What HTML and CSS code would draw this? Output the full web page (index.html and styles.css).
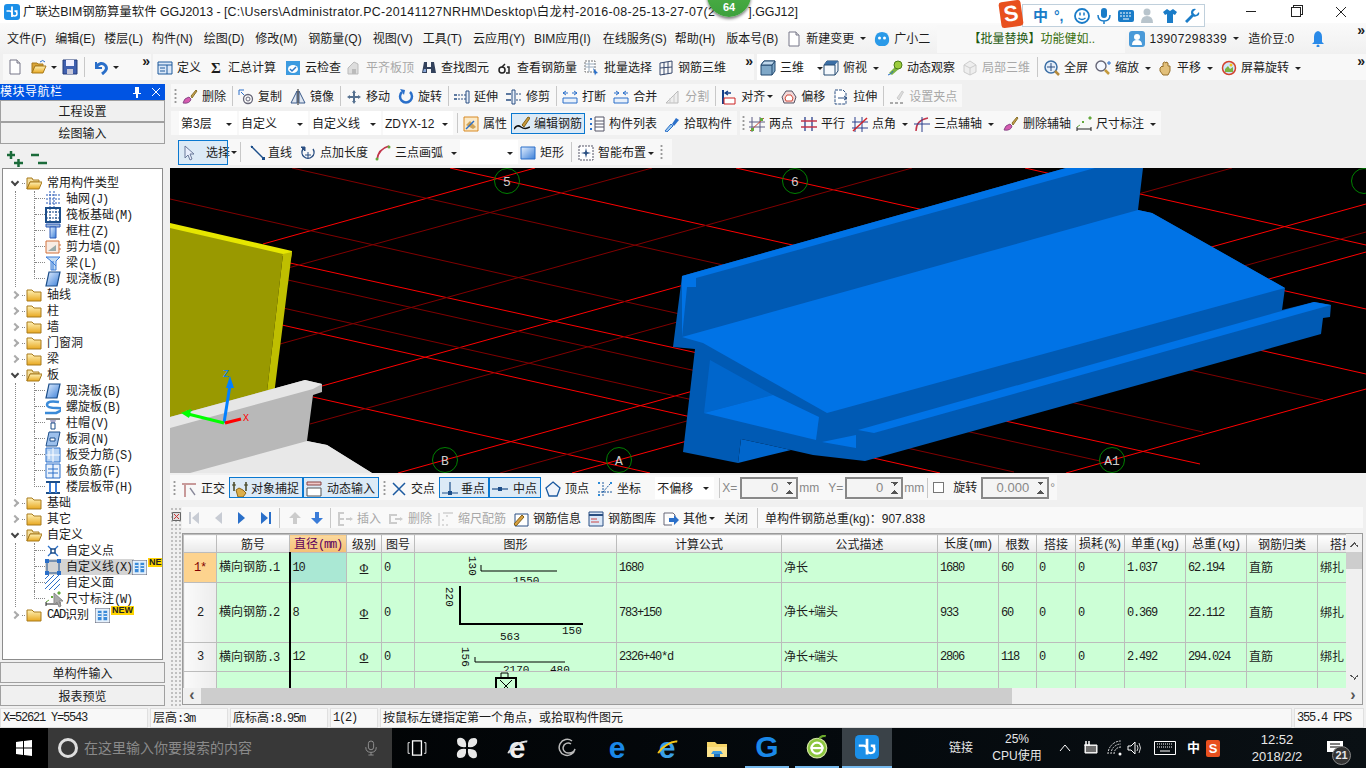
FILE: index.html
```html
<!DOCTYPE html>
<html lang="zh-CN">
<head>
	<meta charset="UTF-8">
	<title>广联达BIM钢筋算量软件 GGJ2013</title>
	<link rel="stylesheet" href="styles.css">
</head>
<body>
<svg class="sprite" xmlns="http://www.w3.org/2000/svg">
	<defs>
		<linearGradient id="gFolder" x1="0" y1="0" x2="0" y2="1"><stop offset="0" stop-color="#fff2b8"/><stop offset="1" stop-color="#e8a820"/></linearGradient>
		<linearGradient id="gBlue" x1="0" y1="0" x2="1" y2="1"><stop offset="0" stop-color="#e4f0ff"/><stop offset="1" stop-color="#3b7fd8"/></linearGradient>
	</defs>
	<!-- 文件 -->
	<symbol id="new" viewBox="0 0 16 16"><path d="M3 1h7l3 3v11H3z" fill="#fff" stroke="#778"/><path d="M10 1v3h3" fill="#ddd" stroke="#778"/></symbol>
	<symbol id="open" viewBox="0 0 16 16"><path d="M1 4h5l1 1h5v2H4L1 14z" fill="#d9a437" stroke="#a87a1c"/><path d="M4 7h11l-3 7H1z" fill="url(#gFolder)" stroke="#a87a1c"/><path d="M9 3q3-3 5 0" fill="none" stroke="#2a6fc9"/></symbol>
	<symbol id="save" viewBox="0 0 16 16"><path d="M1 1h14v14H1z" fill="#3f5fae" stroke="#223a78"/><path d="M4 1h8v6H4z" fill="#eef"/><path d="M5 10h6v5H5z" fill="#c8c8d8"/></symbol>
	<symbol id="undo" viewBox="0 0 16 16"><path d="M3 3v6h6" fill="none" stroke="#2a6fc9" stroke-width="2"/><path d="M3 8q5-6 9-2t-3 9" fill="none" stroke="#2a6fc9" stroke-width="3"/></symbol>
	<!-- 主工具栏 -->
	<symbol id="def" viewBox="0 0 16 16"><path d="M1 2h14v12H1z" fill="#dbe8f8" stroke="#1e5a9c"/><path d="M1 5h14M3 8h5M3 11h5M10 5v9" stroke="#1e5a9c"/></symbol>
	<symbol id="cloud" viewBox="0 0 16 16"><path d="M1 1h14v14H1z" fill="#3d9be0" rx="2"/><ellipse cx="8" cy="9" rx="5" ry="4" fill="#fff"/><path d="M5 9l2 2 4-4" fill="none" stroke="#2a78c9" stroke-width="1.5"/></symbol>
	<symbol id="flat" viewBox="0 0 16 16"><path d="M2 8l6-6 4 2v10H2z" fill="#ddd" stroke="#bbb"/><path d="M6 9h4v5H6z" fill="#bbb"/></symbol>
	<symbol id="find" viewBox="0 0 16 16"><path d="M3 2h3v5h4V2h3l2 11h-5V9H6v4H1z" fill="#33425c"/><path d="M3 9h2v3H2z" fill="#8aa8d8"/></symbol>
	<symbol id="look" viewBox="0 0 16 16"><circle cx="5" cy="10" r="3" fill="none" stroke="#222" stroke-width="1.5"/><path d="M10 7h2v6h-3M5 7l3-3" fill="none" stroke="#222" stroke-width="1.5"/></symbol>
	<symbol id="batch" viewBox="0 0 16 16"><path d="M1 1h10v11H1z" fill="#fff" stroke="#777" stroke-dasharray="2 1"/><path d="M1 4h10M1 7h10M5 1v11" stroke="#9ab"/><path d="M9 8l5 5-2 .5-1 2z" fill="#2a6fc9"/></symbol>
	<symbol id="bars" viewBox="0 0 16 16"><path d="M2 3l12-2v12L2 15z" fill="none" stroke="#36486c"/><path d="M6 2v13M10 2v12M2 8l12-1" stroke="#36486c"/></symbol>
	<symbol id="cube" viewBox="0 0 16 16"><path d="M1 5l3-4h11v10l-3 4H1z" fill="#7fa8c8" stroke="#244a70"/><path d="M1 5h11v10M12 5l3-4" fill="none" stroke="#244a70"/><path d="M1 5h11l3-4H4z" fill="#c0d8ec" stroke="#244a70"/></symbol>
	<symbol id="top" viewBox="0 0 16 16"><path d="M1 5l3-4h11v10l-3 4H1z" fill="#f4f8fc" stroke="#244a70"/><path d="M1 5l3-4h11l-3 4z" fill="#3a6ea5"/><path d="M12 5v10M1 5h11" stroke="#244a70"/></symbol>
	<symbol id="orbit" viewBox="0 0 16 16"><path d="M2 13l8-8 3 3-8 7z" fill="#7cb342"/><circle cx="11" cy="5" r="4" fill="#9ccc3c" stroke="#4a7a18"/><path d="M1 15q4-1 5-4" stroke="#2a6fc9" fill="none"/></symbol>
	<symbol id="local" viewBox="0 0 16 16"><path d="M2 5l6-4 6 4v7l-6 3-6-3z" fill="#eee" stroke="#ccc"/><path d="M2 5l6 3 6-3M8 8v7" stroke="#ccc" fill="none"/></symbol>
	<symbol id="full" viewBox="0 0 16 16"><circle cx="7" cy="7" r="6" fill="#e4eefa" stroke="#3a6ea5" stroke-width="1.5"/><path d="M7 3v8M3 7h8" stroke="#2a4f82"/><path d="M11 11l4 4" stroke="#b58a3c" stroke-width="2.5"/></symbol>
	<symbol id="zoom" viewBox="0 0 16 16"><circle cx="6" cy="6" r="5" fill="#f4f8ff" stroke="#667" stroke-width="1.4"/><path d="M10 10l4 4" stroke="#c49a3c" stroke-width="2.5"/><path d="M14 1v4M12 3h4" stroke="#2a6fc9"/></symbol>
	<symbol id="hand" viewBox="0 0 16 16"><path d="M3 8l2-2 1 1V3l1.500-1L9 3v-1l2 1v3l2 0v5l-2 4H6L3 11z" fill="#e2c07a" stroke="#96702c"/></symbol>
	<symbol id="screen" viewBox="0 0 16 16"><circle cx="8" cy="8" r="6.500" fill="#cfe6fa" stroke="#d2432e" stroke-width="1.500"/><path d="M4 9l3-3 2 3 3-2v5H4z" fill="#7cb342"/><circle cx="10" cy="5" r="1.500" fill="#f5c518"/></symbol>
	<!-- 修改 -->
	<symbol id="brush" viewBox="0 0 16 16"><path d="M9 7l5-6 1 1-5 7z" fill="#c8a04a" stroke="#88702c"/><path d="M1 14q1-5 6-6l2 2q-1 5-8 4z" fill="#d75ab0" stroke="#884a88"/></symbol>
	<symbol id="copy" viewBox="0 0 16 16"><circle cx="10" cy="10" r="4.500" fill="none" stroke="#667" stroke-width="1.300"/><circle cx="10" cy="10" r="2" fill="none" stroke="#667"/><path d="M1 1h5M1 1v5M3 3l3 3" fill="none" stroke="#2a6fc9"/></symbol>
	<symbol id="mirror" viewBox="0 0 16 16"><path d="M7 2v12H1zM9 2v12h6z" fill="#dfe6f0" stroke="#3a5a8a"/><path d="M8 0v16" stroke="#222"/></symbol>
	<symbol id="move" viewBox="0 0 16 16"><path d="M8 1l2 3H9v3h3V6l3 2-3 2V9H9v3h1l-2 3-2-3h1V9H4v1L1 8l3-2v1h3V4H6z" fill="#55708f"/></symbol>
	<symbol id="rotate" viewBox="0 0 16 16"><path d="M4 3a6 6 0 1 0 8 0" fill="none" stroke="#2a6fc9" stroke-width="2.500"/><path d="M2 0l5 1-1 5z" fill="#2a6fc9"/></symbol>
	<symbol id="extend" viewBox="0 0 16 16"><path d="M12 2h3v12h-3z" fill="#e8f0fa" stroke="#2a4f82"/><path d="M0 6h3M0 10h3" stroke="#2a4f82" stroke-width="1.500"/><path d="M4 6h8M4 10h8" stroke="#2a4f82" stroke-dasharray="2 1"/></symbol>
	<symbol id="trim" viewBox="0 0 16 16"><path d="M6 1h3v14H6z" fill="#e8f0fa" stroke="#2a4f82"/><path d="M0 5h5M0 11h5" stroke="#2a4f82" stroke-width="1.500"/><path d="M10 5h5M10 11h5" stroke="#2a4f82" stroke-dasharray="2 1"/></symbol>
	<symbol id="breakl" viewBox="0 0 16 16"><path d="M1 9h14v5H1z" fill="#e8f0fa" stroke="#2a6fc9"/><path d="M4 2l-3 2 3 2M1 4h5M12 2l3 2-3 2M10 4h5" fill="none" stroke="#2a6fc9"/></symbol>
	<symbol id="merge" viewBox="0 0 16 16"><path d="M1 9h14v5H1z" fill="#e8f0fa" stroke="#2a6fc9"/><path d="M3 2l3 2-3 2M1 4h5M13 2l-3 2 3 2M10 4h5" fill="none" stroke="#2a6fc9"/></symbol>
	<symbol id="split" viewBox="0 0 16 16"><path d="M1 14L13 2v12z" fill="#eee" stroke="#bbb"/><path d="M5 14V9M9 14V6" stroke="#ccc"/></symbol>
	<symbol id="align" viewBox="0 0 16 16"><path d="M2 1v14" stroke="#14408a" stroke-width="2"/><path d="M3 9h11v6H3z" fill="#fff" stroke="#c22"/><path d="M4 4h6M7 2L4 4l3 2" fill="none" stroke="#14408a" stroke-width="1.300"/></symbol>
	<symbol id="offset" viewBox="0 0 16 16"><path d="M5 2h6l4 6-2 6H3L1 8z" fill="#f4d8d8" stroke="#556"/><path d="M6 6h4l2 3-1 3H5L4 9z" fill="#fff" stroke="#d24a3a"/></symbol>
	<symbol id="stretch" viewBox="0 0 16 16"><path d="M2 1h8l3 3v11H2z" fill="#fff" stroke="#2a4f82" stroke-dasharray="3 1"/><path d="M5 9h8M11 7l3 2-3 2" stroke="#2a4f82" fill="none"/></symbol>
	<symbol id="grip" viewBox="0 0 16 16"><path d="M8 9l5-7 1.500 1L10 11z" fill="#ddd" stroke="#ccc"/><path d="M1 14h3M6 14h3M11 14h3" stroke="#aaa" stroke-width="2"/></symbol>
	<!-- 属性 -->
	<symbol id="attr" viewBox="0 0 16 16"><path d="M1 1h14v14H1z" fill="#fbe9c6" stroke="#d88a24"/><path d="M3 9l4-4 6 6-3 2z" fill="#d0a458"/><path d="M3 13l8-8" stroke="#2a6fc9" stroke-width="1.500"/></symbol>
	<symbol id="edit" viewBox="0 0 16 16"><path d="M8 9l6-8 2 1-6 9z" fill="#c99a3c" stroke="#806018"/><path d="M0 13q3-5 7-2t9 0" stroke="#111" fill="none" stroke-width="1.500"/></symbol>
	<symbol id="list" viewBox="0 0 16 16"><path d="M1 2h2v2H1zM1 7h2v2H1zM1 12h2v2H1z" fill="#2a6fc9"/><path d="M6 1h9v14H6z" fill="#fff" stroke="#556"/><path d="M6 5h9M6 8h9M6 11h9" stroke="#556"/></symbol>
	<symbol id="pick" viewBox="0 0 16 16"><path d="M1 15l6-7 2 2-6 6z" fill="#9cc8ee" stroke="#2a6fc9"/><path d="M8 8l4-6 3 2-5 6z" fill="#2a6fc9"/></symbol>
	<symbol id="twop" viewBox="0 0 16 16"><path d="M3 1v15M11 1v15M0 6h16M0 11h16" stroke="#5c5c84"/><path d="M1 15L15 2" stroke="#c24a3a"/><path d="M2 12h3v3H2zM11 2h3v3h-3z" fill="#64a83c"/></symbol>
	<symbol id="para" viewBox="0 0 16 16"><path d="M4 1v14M11 1v14" stroke="#2a3f8c" stroke-width="1.300"/><path d="M0 5h16M0 11h16" stroke="#c2344a" stroke-width="1.300"/></symbol>
	<symbol id="angle" viewBox="0 0 16 16"><path d="M3 1v15M10 1v15M0 6h16M0 12h16" stroke="#2a3f8c"/><path d="M1 15L15 2" stroke="#d2242a" stroke-width="1.500"/></symbol>
	<symbol id="arc3" viewBox="0 0 16 16"><path d="M2 15Q2 4 14 2" fill="none" stroke="#c2344a" stroke-width="1.500"/><path d="M8 1v15M0 8h16" stroke="#2a3f8c"/></symbol>
	<symbol id="dim" viewBox="0 0 16 16"><path d="M1 11v4M15 11v4M1 13h14" stroke="#222"/><path d="M1 11l3-2M13 1h2v2h-2z" fill="#64a83c" stroke="#64a83c"/><path d="M6 5h2v2H6z" fill="#64a83c"/></symbol>
	<!-- 绘图 -->
	<symbol id="arrow" viewBox="0 0 16 16"><path d="M4 1v12l3-3 2 5 2-1-2-5h4z" fill="#e8eefc" stroke="#6a7a9a"/></symbol>
	<symbol id="line" viewBox="0 0 16 16"><path d="M1 1l13 13" stroke="#1c4e8a" stroke-width="1.500"/><path d="M1 1h2v2H1zM12 12h3v3h-3z" fill="#1c4e8a"/></symbol>
	<symbol id="plus" viewBox="0 0 16 16"><path d="M3 4a6 6 0 1 0 10 0" fill="none" stroke="#2a4f82" stroke-width="1.400"/><path d="M1 2l4 0v4zM8 7v6M5 10h6" fill="#2a4f82" stroke="#2a4f82"/></symbol>
	<symbol id="arc" viewBox="0 0 16 16"><path d="M2 15Q3 4 14 1" fill="none" stroke="#c2344a" stroke-width="1.700"/><circle cx="2" cy="14" r="1.500" fill="#64a83c"/><circle cx="14" cy="2" r="1.500" fill="#64a83c"/></symbol>
	<symbol id="rect" viewBox="0 0 16 16"><path d="M1 2h14v12H1z" fill="url(#gBlue)" stroke="#2a6fc9"/></symbol>
	<symbol id="smart" viewBox="0 0 16 16"><path d="M1 1h14v14H1z" fill="#fff" stroke="#556" stroke-dasharray="2 1"/><path d="M8 3l1 4 4 1-4 1-1 4-1-4-4-1 4-1z" fill="#2a4f82"/></symbol>
	<!-- 捕捉 -->
	<symbol id="ortho" viewBox="0 0 16 16"><path d="M1 2h14v2H5v12H3V4H1z" fill="#c89a9a"/><path d="M9 7l5 7" stroke="#889" stroke-width="1.300"/></symbol>
	<symbol id="snap" viewBox="0 0 16 16"><path d="M2 1v9M14 1v9" stroke="#442" stroke-width="1.500"/><path d="M0 4h4M12 4h4" stroke="#442"/><path d="M4 9l3-2 4 2 3 3-3 4H6z" fill="#dcae4a" stroke="#906818"/></symbol>
	<symbol id="dyn" viewBox="0 0 16 16"><path d="M1 1h14v3H1z" fill="#f0c8c8" stroke="#844"/><path d="M1 7h14v8H1z" fill="#fff" stroke="#555"/></symbol>
	<symbol id="cross" viewBox="0 0 16 16"><path d="M2 2l12 12M14 2L2 14" stroke="#1c5aa0" stroke-width="1.500"/></symbol>
	<symbol id="perp" viewBox="0 0 16 16"><path d="M8 1v11M0 12h16" stroke="#1c4e8a" stroke-width="1.200"/><path d="M6 10h4v4H6z" fill="#1c4e8a"/></symbol>
	<symbol id="mid" viewBox="0 0 16 16"><path d="M0 8h16" stroke="#1c4e8a" stroke-width="1.200"/><path d="M6 6h4v4H6z" fill="#1c4e8a"/></symbol>
	<symbol id="vertex" viewBox="0 0 16 16"><path d="M8 1l7 6-3 8H4L1 7z" fill="#f0f4fa" stroke="#1c5aa0" stroke-width="1.300"/></symbol>
	<symbol id="coord" viewBox="0 0 16 16"><path d="M6 1v14M1 11h14M6 11l7-8" stroke="#1c5aa0" stroke-dasharray="2 1" fill="none"/><path d="M1 1h2v2H1zM13 1h2v2h-2zM1 13h2v2H1z" fill="#2a8ad8"/></symbol>
	<!-- 明细 -->
	<symbol id="first" viewBox="0 0 16 16"><path d="M3 2h2v12H3zM13 2v12L6 8z" fill="#c8ccd4"/></symbol>
	<symbol id="prev" viewBox="0 0 16 16"><path d="M11 2v12L4 8z" fill="#c8ccd4"/></symbol>
	<symbol id="next" viewBox="0 0 16 16"><path d="M5 2v12l7-6z" fill="#2a6fc9"/></symbol>
	<symbol id="last" viewBox="0 0 16 16"><path d="M3 2v12l7-6zM11 2h2v12h-2z" fill="#2a6fc9"/></symbol>
	<symbol id="up" viewBox="0 0 16 16"><path d="M8 2l6 6h-4v6H6V8H2z" fill="#ccc"/></symbol>
	<symbol id="down" viewBox="0 0 16 16"><path d="M8 14l6-6h-4V2H6v6H2z" fill="#3a7cd8"/></symbol>
	<symbol id="ins" viewBox="0 0 16 16"><path d="M1 1h6v2H3v4h4v2H3v4h4v2H1zM9 7h4v2H9z" fill="#ccc"/><path d="M13 6l3 2-3 2z" fill="#ccc"/></symbol>
	<symbol id="del" viewBox="0 0 16 16"><path d="M1 3h8v2H3v6h6v2H1zM7 7h5v2H7z" fill="#ccc"/><path d="M12 6l3 2-3 2z" fill="#ccc"/></symbol>
	<symbol id="scale" viewBox="0 0 16 16"><path d="M1 2v13M15 2H5M4 14h2M8 14h2M4 9h2M8 5h2" stroke="#bbb"/></symbol>
	<symbol id="info" viewBox="0 0 16 16"><path d="M2 3h13v12H2z" fill="#fff" stroke="#2a4f82"/><path d="M1 13l8-9 2 2-8 9z" fill="#d8a040" stroke="#806018"/></symbol>
	<symbol id="lib" viewBox="0 0 16 16"><path d="M1 1h14v14H1z" fill="#dbe8f8" stroke="#2a4f82"/><path d="M1 4h14" stroke="#2a4f82" stroke-width="2"/><path d="M3 8h6M3 11h8" stroke="#c44"/></symbol>
	<symbol id="other" viewBox="0 0 16 16"><path d="M1 2h9l2 2v3M1 2v12h8" fill="#fff" stroke="#667"/><path d="M6 7h5V4l5 5-5 5v-3H6z" fill="#2a6fc9"/></symbol>
	<!-- 导航树 -->
	<symbol id="folder" viewBox="0 0 16 14"><path d="M1 2h5l2 2h7v9H1z" fill="url(#gFolder)" stroke="#a87a1c"/></symbol>
	<symbol id="folderopen" viewBox="0 0 16 14"><path d="M1 2h5l1 2h6v2H4l-3 7z" fill="#f5e0a0" stroke="#a87a1c"/><path d="M4 6h12l-3 7H1z" fill="url(#gFolder)" stroke="#a87a1c"/></symbol>
	<symbol id="axis" viewBox="0 0 16 16"><path d="M1 4h14M1 8h14M1 12h14M5 0v16M9 0v16" stroke="#2a5ab8" stroke-dasharray="2 1"/></symbol>
	<symbol id="raft" viewBox="0 0 16 16"><path d="M1 1h14v14H1z" fill="#fff" stroke="#1c4e8a" stroke-width="2"/><path d="M1 5h14M1 11h14M5 1v14M11 1v14" stroke="#1c4e8a" stroke-dasharray="2 1"/></symbol>
	<symbol id="col" viewBox="0 0 16 16"><path d="M1 1h14v3H1z" fill="#9ab4d8" stroke="#2a5ab8"/><path d="M5 4h6v11H5z" fill="url(#gBlue)" stroke="#2a5ab8"/></symbol>
	<symbol id="wall" viewBox="0 0 16 16"><path d="M1 2h13v12H1z" fill="#f8ece4" stroke="#d2703a"/><path d="M3 12l8-6v6z" fill="#9aa"/><path d="M15 5v2M15 9v2" stroke="#d2703a"/></symbol>
	<symbol id="beam" viewBox="0 0 16 16"><path d="M1 2h14l-4 4v9H6V6z" fill="#c4dcf4" stroke="#3a7cd8"/><path d="M6 6l5 5M8 6v9" stroke="#3a7cd8"/></symbol>
	<symbol id="slab" viewBox="0 0 16 16"><path d="M4 1h11l-3 14H1z" fill="url(#gBlue)" stroke="#1c4e8a" stroke-width="1.200"/></symbol>
	<symbol id="spiral" viewBox="0 0 16 16"><path d="M14 3Q2 1 2 6q0 3 10 3t-1 5H0" fill="none" stroke="#3a8ad8" stroke-width="2.500"/></symbol>
	<symbol id="cap" viewBox="0 0 16 16"><path d="M1 3h14v2H1z" fill="#888"/><path d="M5 5h6l-1 3H6z" fill="#aac"/><path d="M6 8h4v6H6z" fill="#fff" stroke="#1c4e8a"/></symbol>
	<symbol id="hole" viewBox="0 0 16 16"><path d="M4 1h11l-3 14H1z" fill="#9cc0ec" stroke="#1c4e8a"/><path d="M5 7h5v3H5z" fill="#fff" stroke="#1c4e8a"/></symbol>
	<symbol id="rebar" viewBox="0 0 16 16"><path d="M1 1h14v14H1z" fill="#b8d4f4" stroke="#2a6fc9"/><path d="M1 8h14M8 1v14M4 4v8" stroke="#fff"/></symbol>
	<symbol id="neg" viewBox="0 0 16 16"><path d="M1 1h14v14H1z" fill="#eaf2fc" stroke="#2a6fc9"/><path d="M3 6h10M3 10h10M8 1v14" stroke="#2a6fc9"/></symbol>
	<symbol id="band" viewBox="0 0 16 16"><path d="M1 3h14M1 14h14" stroke="#1c4e8a" stroke-width="2"/><path d="M5 4v10M11 4v10" stroke="#3a7cd8" stroke-width="2"/></symbol>
	<symbol id="pt" viewBox="0 0 16 16"><path d="M3 3l10 10M13 3L3 13" stroke="#2a6fc9" stroke-width="1.300"/><path d="M6 6h4v4H6z" fill="#fff" stroke="#1c4e8a" stroke-width="1.500"/></symbol>
	<symbol id="lineb" viewBox="0 0 16 16"><path d="M2 2h12v12H2z" fill="none" stroke="#1c4e8a"/><path d="M0 0h4v4H0zM12 0h4v4h-4zM0 12h4v4H0zM12 12h4v4h-4z" fill="#2a6fc9"/></symbol>
	<symbol id="hatch" viewBox="0 0 16 16"><path d="M0 4l4-4M0 9l9-9M0 14L14 0M4 15L15 4M9 15l6-6" stroke="#2a6fc9"/></symbol>
	<symbol id="bim" viewBox="0 0 16 16"><path d="M0 0h16v16H0z" fill="#e4f0fc" stroke="#556"/><path d="M3 3h4v10H3zM9 3h4v10H9z" fill="#3a8ad8"/><path d="M3 6h4M9 6h4M3 9h4M9 9h4" stroke="#fff"/></symbol>
	<!-- 任务栏 -->
	<symbol id="win" viewBox="0 0 16 16"><path d="M0 2l7-1v6.500H0zM8 1l8-1v7.500H8zM0 8.500h7V15l-7-1zM8 8.500h8V16l-8-1z" fill="#fff"/></symbol>
	<symbol id="mic" viewBox="0 0 16 16"><rect x="5" y="0" width="6" height="10" rx="3" fill="none" stroke="#999"/><path d="M2 7q0 6 6 6t6-6M8 13v3M5 16h6" fill="none" stroke="#999"/></symbol>
	<symbol id="taskview" viewBox="0 0 22 18"><path d="M6 1h10v16H6z" fill="none" stroke="#fff" stroke-width="1.500"/><path d="M3 3H1v12h2M19 3h2v12h-2" fill="none" stroke="#fff"/></symbol>
	<symbol id="fan" viewBox="0 0 24 24"><path d="M11 11Q2 12 2 5q0-4 5-3 5 2 4 9zM13 11Q12 2 19 2q4 0 3 5-2 5-9 4zM13 13q9-1 9 6 0 4-5 3-5-2-4-9zM11 13q1 9-6 9-4 0-3-5 2-5 9-4z" fill="#e8e8e8"/></symbol>
	<symbol id="swirl" viewBox="0 0 20 20"><path d="M15 3a8 8 0 1 0 3 8q-1 4-6 4a5 5 0 1 1 2-9" fill="none" stroke="#bbb" stroke-width="1.500"/></symbol>
	<symbol id="ftp" viewBox="0 0 22 22"><path d="M1 5h8l2 2h10v13H1z" fill="#f5d469"/><path d="M1 10h20v10H1z" fill="#fbe28c"/><path d="M7 14h8l2 3H5z" fill="#3d9be0"/><path d="M8 17h6v3H8z" fill="#1e6fb8"/></symbol>
	<symbol id="battery" viewBox="0 0 16 16"><path d="M3 5h12v8H3z" fill="#ddd" stroke="#fff"/><path d="M4 6h10v6H4z" fill="#000" opacity=".5"/><path d="M4 1v4M7 1v4" stroke="#fff" stroke-width="1.500"/><path d="M2 5h6" stroke="#fff"/></symbol>
	<symbol id="wifi" viewBox="0 0 16 16"><path d="M1 14a13 13 0 0 1 13-13M4 14a10 10 0 0 1 10-10M7 14a7 7 0 0 1 7-7" fill="none" stroke="#ddd" stroke-dasharray="2 1"/><circle cx="13" cy="14" r="1.500" fill="#fff"/></symbol>
	<symbol id="speaker" viewBox="0 0 16 16"><path d="M1 6h3l4-4v12l-4-4H1z" fill="none" stroke="#fff"/><path d="M10 5q2 3 0 6M12 3q3 5 0 10" fill="none" stroke="#ccc"/></symbol>
	<symbol id="keyb" viewBox="0 0 22 14"><path d="M.5.500h21v13H.500z" fill="none" stroke="#fff"/><path d="M3 3h16M3 6h16" stroke="#fff" stroke-dasharray="1 1"/><path d="M6 10h10" stroke="#fff"/></symbol>
	<symbol id="app" viewBox="0 0 16 16"><rect width="16" height="16" rx="3" fill="#1b8fe8"/><path d="M8 2.500V13" fill="none" stroke="#fff" stroke-width="1.800"/><path d="M2.500 7h3q2.500 0 2.500 2.500T10.500 12 13 9.500 10.500 7h3" fill="none" stroke="#fff" stroke-width="1.500"/></symbol>
	<symbol id="egg" viewBox="0 0 20 22"><ellipse cx="10" cy="12" rx="9" ry="9" fill="#8cc63f" stroke="#d8e8a8"/><circle cx="10" cy="12" r="5" fill="none" stroke="#fff" stroke-width="2"/><path d="M4 12h12" stroke="#fff" stroke-width="2"/><path d="M12 3q3-3 6-2" fill="none" stroke="#6aa82c" stroke-width="2"/></symbol>
</svg>

<div class="app">
	<header class="titlebar">
		<svg class="ic logo"><use href="#app"/></svg>
		<span class="title">广联达BIM钢筋算量软件 GGJ2013 - [<span class="path">C:\Users\Administrator.PC-20141127NRHM\Desktop\白龙村-2016-08-25-13-27-07(2</span></span>
		<span class="title title-end">].GGJ12]</span>
		<div class="winbtns">
			<span class="winbtn"><i class="win-min"></i></span>
			<span class="winbtn"><i class="win-max"></i></span>
			<span class="winbtn"><svg width="12" height="12" viewBox="0 0 12 12"><path d="M1 1l10 10M11 1L1 11" stroke="#222"/></svg></span>
		</div>
	</header>

	<div class="badge">64</div>
	<div class="ime">
		<span class="ime-logo">S</span>
		<span class="ime-zh">中</span>
		<span class="ime-dot">°,</span>
		<svg class="ime-ic ime-smile" viewBox="0 0 16 16"><circle cx="8" cy="8" r="7" fill="#fff" stroke="#1a7cc8" stroke-width="1.800"/><path d="M6 4.500v3M10 4.500v3" stroke="#1a7cc8" stroke-width="1.500"/><path d="M4.500 10q3.500 3 7 0" fill="none" stroke="#1a7cc8" stroke-width="1.300"/></svg>
		<svg class="ime-ic" viewBox="0 0 16 16"><rect x="5" y="0" width="6" height="10" rx="3" fill="#1a7cc8"/><path d="M2 7q0 6 6 6t6-6M8 13v3" fill="none" stroke="#1a7cc8" stroke-width="1.500"/></svg>
		<svg class="ime-ic" viewBox="0 0 16 16"><rect y="2" width="16" height="12" rx="2" fill="#1a7cc8"/><path d="M2 5h12M2 8h12" stroke="#fff" stroke-dasharray="2 1"/><path d="M5 11h6" stroke="#fff"/></svg>
		<svg class="ime-ic" viewBox="0 0 16 16"><circle cx="7" cy="4" r="3.500" fill="#b8c4cc"/><path d="M1 15q0-7 6-7t6 7z" fill="#b8c4cc"/></svg>
		<svg class="ime-ic" viewBox="0 0 16 16"><path d="M5 1L1 4l2 3 2-1v9h6V6l2 1 2-3-4-3-3 2z" fill="#1a7cc8"/></svg>
		<svg class="ime-ic" viewBox="0 0 16 16"><path d="M15 4l-3 3-2-1-1-2 3-3Q8 0 7 4q0 2 .5 2.500L1 13l2 2 6.500-6.500Q11 9 13 8q3-1 2-4z" fill="#1a7cc8"/></svg>
	</div>

	<nav class="menubar">
		<span>文件(F)</span><span>编辑(E)</span><span>楼层(L)</span><span>构件(N)</span><span>绘图(D)</span><span>修改(M)</span><span>钢筋量(Q)</span><span>视图(V)</span><span>工具(T)</span><span>云应用(Y)</span><span>BIM应用(I)</span><span>在线服务(S)</span><span>帮助(H)</span><span>版本号(B)</span>
		<span class="tool m-new"><svg class="ic"><use href="#new"/></svg>新建变更<i class="caret"></i></span>
		<span class="tool m-xiao"><svg class="ic" viewBox="0 0 16 16"><path d="M8 1q6 0 7 6t-4 8H5Q0 13 1 7t7-6z" fill="#2a9ae8"/><circle cx="5.500" cy="7" r="1.500" fill="#fff"/><circle cx="10.500" cy="7" r="1.500" fill="#fff"/></svg>广小二</span>
		<span class="adbox"><b>【批量替换】</b>功能健如..</span>
		<span class="tool m-user"><svg class="ic" viewBox="0 0 16 16"><rect width="16" height="16" rx="3" fill="#4a9ad8"/><circle cx="8" cy="6" r="3" fill="#fff"/><path d="M3 14q0-5 5-5t5 5z" fill="#fff"/></svg><span class="phone">13907298339</span><i class="caret"></i></span>
		<span class="m-bean">造价豆:0</span>
		<svg class="ic m-bell" viewBox="0 0 16 16"><path d="M8 0q4 1 4 6v5l2 2H2l2-2V6q0-5 4-6z" fill="#2a8ae8"/><circle cx="8" cy="15" r="1.500" fill="#2a8ae8"/></svg>
		<span class="more m-more">»</span>
	</nav>

	<div class="toolrow-top">
		<div class="bar bar-file">
			<svg class="ic"><use href="#new"/></svg>
			<svg class="ic ic-open"><use href="#open"/></svg><i class="caret"></i>
			<svg class="ic ic-save"><use href="#save"/></svg>
			<i class="sep"></i>
			<svg class="ic"><use href="#undo"/></svg><i class="caret"></i>
			<span class="more">»</span>
		</div>
		<div class="bar bar-main">
			<span class="tool"><svg class="ic"><use href="#def"/></svg>定义</span>
			<span class="tool sigma"><b>Σ</b>汇总计算</span>
			<span class="tool sh1"><svg class="ic"><use href="#cloud"/></svg>云检查</span>
			<span class="tool off sh-3"><svg class="ic"><use href="#flat"/></svg>平齐板顶</span>
			<span class="tool sh-1"><svg class="ic"><use href="#find"/></svg>查找图元</span>
			<span class="tool"><svg class="ic"><use href="#look"/></svg>查看钢筋量</span>
			<span class="tool sh-1"><svg class="ic"><use href="#batch"/></svg>批量选择</span>
			<span class="tool sh-2"><svg class="ic"><use href="#bars"/></svg>钢筋三维</span>
			<span class="more">»</span>
		</div>
		<div class="bar bar-view">
			<span class="tool view3d"><svg class="ic"><use href="#cube"/></svg>三维<i class="caret"></i></span>
			<span class="tool sh-1"><svg class="ic"><use href="#top"/></svg>俯视<i class="caret"></i></span>
			<span class="tool"><svg class="ic"><use href="#orbit"/></svg>动态观察</span>
			<span class="tool off sh-1"><svg class="ic"><use href="#local"/></svg>局部三维</span>
			<i class="sep"></i>
			<span class="tool"><svg class="ic"><use href="#full"/></svg>全屏</span>
			<span class="tool sh-1"><svg class="ic"><use href="#zoom"/></svg>缩放<i class="caret"></i></span>
			<span class="tool sh-2"><svg class="ic"><use href="#hand"/></svg>平移<i class="caret"></i></span>
			<span class="tool"><svg class="ic"><use href="#screen"/></svg>屏幕旋转<i class="caret"></i></span>
			<span class="more">»</span>
		</div>
	</div>

	<div class="workspace">
		<aside class="sidebar">
			<div class="side-head">
				<span>模块导航栏</span>
				<svg width="10" height="12" viewBox="0 0 10 12"><path d="M3 1h4v6h2v1H6v4H4V8H1V7h2z" fill="#fff"/></svg>
				<svg width="10" height="10" viewBox="0 0 10 10"><path d="M1 1l8 8M9 1L1 9" stroke="#fff"/></svg>
			</div>
			<div class="side-btn">工程设置</div>
			<div class="side-btn">绘图输入</div>
			<div class="side-tools">
				<svg width="16" height="16" viewBox="0 0 16 16"><path d="M0 4h8M4 0v8M7 12h9M11.500 8v8" stroke="#1b6b3a" stroke-width="2.500"/></svg>
				<svg width="16" height="16" viewBox="0 0 16 16"><path d="M0 4h8" stroke="#1b6b3a" stroke-width="2.500"/><path d="M7 12h9" stroke="#1b6b3a" stroke-width="2.500"/></svg>
			</div>
			<div class="tree">
				<div class="node"><i class="chev open"></i><i class="dots"></i><svg class="ic fold"><use href="#folderopen"/></svg>常用构件类型</div>
				<div class="kids">
					<div class="kid"><i class="tick"></i><svg class="ic"><use href="#axis"/></svg><span>轴网<span class="a">(J)</span></span></div>
					<div class="kid"><i class="tick"></i><svg class="ic"><use href="#raft"/></svg><span>筏板基础<span class="a">(M)</span></span></div>
					<div class="kid"><i class="tick"></i><svg class="ic"><use href="#col"/></svg><span>框柱<span class="a">(Z)</span></span></div>
					<div class="kid"><i class="tick"></i><svg class="ic"><use href="#wall"/></svg><span>剪力墙<span class="a">(Q)</span></span></div>
					<div class="kid"><i class="tick"></i><svg class="ic"><use href="#beam"/></svg><span>梁<span class="a">(L)</span></span></div>
					<div class="kid"><i class="tick"></i><svg class="ic"><use href="#slab"/></svg><span>现浇板<span class="a">(B)</span></span></div>
				</div>
				<div class="node"><i class="chev"></i><i class="dots"></i><svg class="ic fold"><use href="#folder"/></svg>轴线</div>
				<div class="node"><i class="chev"></i><i class="dots"></i><svg class="ic fold"><use href="#folder"/></svg>柱</div>
				<div class="node"><i class="chev"></i><i class="dots"></i><svg class="ic fold"><use href="#folder"/></svg>墙</div>
				<div class="node"><i class="chev"></i><i class="dots"></i><svg class="ic fold"><use href="#folder"/></svg>门窗洞</div>
				<div class="node"><i class="chev"></i><i class="dots"></i><svg class="ic fold"><use href="#folder"/></svg>梁</div>
				<div class="node"><i class="chev open"></i><i class="dots"></i><svg class="ic fold"><use href="#folderopen"/></svg>板</div>
				<div class="kids">
					<div class="kid"><i class="tick"></i><svg class="ic"><use href="#slab"/></svg><span>现浇板<span class="a">(B)</span></span></div>
					<div class="kid"><i class="tick"></i><svg class="ic"><use href="#spiral"/></svg><span>螺旋板<span class="a">(B)</span></span></div>
					<div class="kid"><i class="tick"></i><svg class="ic"><use href="#cap"/></svg><span>柱帽<span class="a">(V)</span></span></div>
					<div class="kid"><i class="tick"></i><svg class="ic"><use href="#hole"/></svg><span>板洞<span class="a">(N)</span></span></div>
					<div class="kid"><i class="tick"></i><svg class="ic"><use href="#rebar"/></svg><span>板受力筋<span class="a">(S)</span></span></div>
					<div class="kid"><i class="tick"></i><svg class="ic"><use href="#neg"/></svg><span>板负筋<span class="a">(F)</span></span></div>
					<div class="kid"><i class="tick"></i><svg class="ic"><use href="#band"/></svg><span>楼层板带<span class="a">(H)</span></span></div>
				</div>
				<div class="node"><i class="chev"></i><i class="dots"></i><svg class="ic fold"><use href="#folder"/></svg>基础</div>
				<div class="node"><i class="chev"></i><i class="dots"></i><svg class="ic fold"><use href="#folder"/></svg>其它</div>
				<div class="node"><i class="chev open"></i><i class="dots"></i><svg class="ic fold"><use href="#folderopen"/></svg>自定义</div>
				<div class="kids">
					<div class="kid"><i class="tick"></i><svg class="ic"><use href="#pt"/></svg><span>自定义点</span></div>
					<div class="kid cur"><i class="tick"></i><svg class="ic"><use href="#lineb"/></svg><span>自定义线<span class="a">(X)</span></span><svg class="ic ic-bim"><use href="#bim"/></svg><b class="newtag">NE</b></div>
					<div class="kid"><i class="tick"></i><svg class="ic"><use href="#hatch"/></svg><span>自定义面</span></div>
					<div class="kid"><i class="tick"></i><svg class="ic"><use href="#dim"/></svg><span>尺寸标注<span class="a">(W)</span></span></div>
				</div>
				<div class="node"><i class="chev"></i><i class="dots"></i><svg class="ic fold"><use href="#folder"/></svg><span class="a cad">CAD</span>识别<svg class="ic ic-bim2"><use href="#bim"/></svg><b class="newtag">NEW</b></div>
				<svg class="cursor" width="12" height="16" viewBox="0 0 12 16"><path d="M1 1v12l3-3 2 5 2-1-2-5h4z" fill="#aaa" stroke="#888"/></svg>
			</div>
			<div class="side-btn btn-low">单构件输入</div>
			<div class="side-btn btn-low">报表预览</div>
		</aside>

		<main class="content">
			<div class="bar row-edit">
				<i class="grab"></i>
				<span class="tool"><svg class="ic"><use href="#brush"/></svg>删除</span><i class="sep"></i>
				<span class="tool"><svg class="ic"><use href="#copy"/></svg>复制</span>
				<span class="tool"><svg class="ic"><use href="#mirror"/></svg>镜像</span><i class="sep"></i>
				<span class="tool"><svg class="ic"><use href="#move"/></svg>移动</span>
				<span class="tool"><svg class="ic"><use href="#rotate"/></svg>旋转</span><i class="sep"></i>
				<span class="tool"><svg class="ic"><use href="#extend"/></svg>延伸</span>
				<span class="tool"><svg class="ic"><use href="#trim"/></svg>修剪</span><i class="sep"></i>
				<span class="tool"><svg class="ic"><use href="#breakl"/></svg>打断</span>
				<span class="tool sh-1"><svg class="ic"><use href="#merge"/></svg>合并</span>
				<span class="tool off"><svg class="ic"><use href="#split"/></svg>分割</span><i class="sep"></i>
				<span class="tool"><svg class="ic"><use href="#align"/></svg>对齐<i class="caret tight"></i></span>
				<span class="tool"><svg class="ic"><use href="#offset"/></svg>偏移</span>
				<span class="tool"><svg class="ic"><use href="#stretch"/></svg>拉伸</span><i class="sep"></i>
				<span class="tool off"><svg class="ic"><use href="#grip"/></svg>设置夹点</span>
			</div>

			<div class="row-props">
				<div class="bar bar-props">
					<span class="combo w58">第3层<i class="caret"></i></span>
					<span class="combo w69">自定义<i class="caret"></i></span>
					<span class="combo w71">自定义线<i class="caret"></i></span>
					<span class="combo w70">ZDYX-12<i class="caret"></i></span>
					<i class="sep"></i>
					<span class="tool sh-1"><svg class="ic"><use href="#attr"/></svg>属性</span>
					<span class="tool on w-edit"><svg class="ic"><use href="#edit"/></svg>编辑钢筋</span>
					<span class="tool w-list"><svg class="ic"><use href="#list"/></svg>构件列表</span>
					<span class="tool sh-1"><svg class="ic"><use href="#pick"/></svg>拾取构件</span>
				</div>
				<div class="bar bar-aux">
					<i class="grab"></i>
					<span class="tool sh-1"><svg class="ic"><use href="#twop"/></svg>两点</span>
					<span class="tool"><svg class="ic"><use href="#para"/></svg>平行</span>
					<span class="tool sh-1"><svg class="ic"><use href="#angle"/></svg>点角<i class="caret"></i></span>
					<span class="tool sh-2"><svg class="ic"><use href="#arc3"/></svg>三点辅轴<i class="caret"></i></span>
					<span class="tool sh1"><svg class="ic"><use href="#brush"/></svg>删除辅轴</span>
					<span class="tool sh-3"><svg class="ic"><use href="#dim"/></svg>尺寸标注<i class="caret"></i></span>
				</div>
			</div>

			<div class="row-draw">
				<div class="bar bar-draw">
					<span class="tool on w-sel"><svg class="ic"><use href="#arrow"/></svg>选择</span><i class="caret"></i>
					<i class="sep"></i>
					<span class="tool t-line sh3"><svg class="ic"><use href="#line"/></svg>直线</span>
					<span class="tool"><svg class="ic"><use href="#plus"/></svg>点加长度</span>
					<span class="tool sh-1"><svg class="ic"><use href="#arc"/></svg>三点画弧<i class="caret"></i></span>
					<span class="combo w58 c-blank"><i class="caret"></i></span>
					<span class="tool sh-2"><svg class="ic"><use href="#rect"/></svg>矩形</span>
					<i class="sep"></i>
					<span class="tool"><svg class="ic"><use href="#smart"/></svg>智能布置<i class="caret tight"></i></span>
					<i class="grab"></i>
				</div>
			</div>

			<svg class="scene" viewBox="170 168 1196 305" preserveAspectRatio="none">
				<rect x="170" y="168" width="1196" height="305" fill="#000"/>
				<g stroke="#ff0000" stroke-width="1">
					<path d="M1025 168L1366 245M736 168L1366 309M450 168L1366 374M290 263L1200 464M282 325L940 473M313 397L650 473"/>
					<path d="M263 244L535 168M322 386L1103 168M398 473L1366 204M572 473L1366 252M1066 473L1366 389"/>
				</g>
				<g stroke="#800000" stroke-width="1">
					<path d="M292 168L1323 400M170 199L1203 432M288 280L1100 461M283 308L1014 472"/>
					<path d="M288 268L652 168M280 344L912 168M310 424L1232 168M500 473L1366 232"/>
				</g>

				<polygon points="170,223 292,251 291,258 170,230" fill="#e6e600"/>
				<polygon points="170,228 283,254 266,400 170,430" fill="#999900"/>
				<polygon points="283,254 292,252 274,395 266,400" fill="#bfbf00"/>

				<polygon points="170,417 305,380 322,384 322,392 313,395 307,441 327,445 372,473 170,473" fill="#b8b8b8"/>
				<polygon points="170,417 305,380 322,384 313,389 170,428" fill="#e6e6e6"/>
				<polygon points="190,473 307,441 327,445 372,473" fill="#e8e8e8"/>

				<polygon points="682,276 1066,168 1143,168 1138,210 1152,213 1285,288 1282,310 1314,302 1331,305 1330,317 1323,318 1321,334 865,461 813,455 791,450 741,439 738,463 683,452 695,349 673,347" fill="#005ab4"/>
				<polygon points="682,276 1066,168 1095,168 696,278 696,287 687,287 682,337" fill="#0073e6"/>
				<polygon points="682,337 1138,210 1152,213 1285,288 827,413 703,343" fill="#0073e6"/>
				<polygon points="710,360 773,395 704,413" fill="#0066cc"/>
				<polygon points="704,413 773,395 819,417 816,440" fill="#0073e6"/>
				<polygon points="741,439 791,450 738,463" fill="#0066cc"/>
				<polygon points="822,442 856,435 856,448" fill="#0073e6"/>
				<polygon points="858,430 1314,302 1331,305 874,433" fill="#0073e6"/>

				<g fill="none" stroke="#008000">
					<circle cx="507" cy="181" r="12.500"/>
					<circle cx="795" cy="181" r="12.500"/>
					<circle cx="1364" cy="181" r="12.500"/>
					<circle cx="445" cy="460" r="12.500"/>
					<circle cx="619" cy="460" r="12.500"/>
					<circle cx="1112" cy="460" r="12.500"/>
				</g>
				<g class="axis-label" text-anchor="middle">
					<text x="507" y="186">5</text>
					<text x="795" y="186">6</text>
					<text x="445" y="465">B</text>
					<text x="619" y="465">A</text>
					<text x="1112" y="465">A1</text>
				</g>

				<path d="M224 423L230 385" stroke="#0080ff" stroke-width="3"/>
				<path d="M230 376l-4 12h8z" fill="#0080ff"/>
				<path d="M224 423L188 414" stroke="#00ff00" stroke-width="3"/>
				<path d="M181 413l10-4-2 9z" fill="#00ff00"/>
				<path d="M225 423l16-4" stroke="#ff0000" stroke-width="3"/>
				<text class="gizmo" x="223" y="377" fill="#0080ff">Z</text>
				<text class="gizmo" x="186" y="417" fill="#00ff00">Y</text>
				<text class="gizmo" x="243" y="421" fill="#ff0000">X</text>
			</svg>

			<div class="row-snap">
				<div class="bar bar-snap">
					<i class="grab"></i>
					<span class="tool"><svg class="ic"><use href="#ortho"/></svg>正交</span>
					<span class="tool on"><svg class="ic"><use href="#snap"/></svg>对象捕捉</span>
					<span class="tool on wide"><svg class="ic"><use href="#dyn"/></svg>动态输入</span>
					<i class="grab"></i>
					<span class="tool"><svg class="ic"><use href="#cross"/></svg>交点</span>
					<span class="tool on"><svg class="ic"><use href="#perp"/></svg>垂点</span>
					<span class="tool on wide"><svg class="ic"><use href="#mid"/></svg>中点</span>
					<span class="tool"><svg class="ic"><use href="#vertex"/></svg>顶点</span>
					<span class="tool"><svg class="ic"><use href="#coord"/></svg>坐标</span>
					<span class="combo w59 c-off">不偏移<i class="caret"></i></span>
					<i class="sep"></i>
					<span class="lbl l-x">X=</span>
					<span class="spin s58">0<i class="arrows"></i></span>
					<span class="lbl">mm</span>
					<span class="lbl l-y">Y=</span>
					<span class="spin s58">0<i class="arrows"></i></span>
					<span class="lbl">mm</span>
					<i class="sep"></i>
					<i class="check"></i>
					<span class="rot">旋转</span>
					<span class="spin s68">0.000<i class="arrows"></i></span>
					<span class="lbl">°</span>
				</div>
			</div>

			<section class="rebar">
				<div class="rebar-grip"><svg width="9" height="9" viewBox="0 0 9 9"><path d="M.5.500h8v8h-8z" fill="#ddd" stroke="#666"/><path d="M2 2l5 5M7 2L2 7" stroke="#c33"/></svg></div>
				<div class="rebar-main">
					<div class="rowdetail">
						<svg class="ic"><use href="#first"/></svg>
						<svg class="ic n-prev"><use href="#prev"/></svg>
						<svg class="ic n-next"><use href="#next"/></svg>
						<svg class="ic n-last"><use href="#last"/></svg>
						<i class="sep"></i>
						<svg class="ic n-up"><use href="#up"/></svg>
						<svg class="ic n-next"><use href="#down"/></svg>
						<i class="sep"></i>
						<span class="tool off"><svg class="ic"><use href="#ins"/></svg>插入</span>
						<span class="tool off sh-1"><svg class="ic"><use href="#del"/></svg>删除</span>
						<span class="tool off sh-2"><svg class="ic"><use href="#scale"/></svg>缩尺配筋</span>
						<span class="tool sh-1"><svg class="ic"><use href="#info"/></svg>钢筋信息</span>
						<span class="tool sh-1"><svg class="ic"><use href="#lib"/></svg>钢筋图库</span>
						<span class="tool sh-1"><svg class="ic"><use href="#other"/></svg>其他<i class="caret tight"></i></span>
						<span class="tool t-close">关闭</span>
						<i class="sep"></i>
						<span class="total">单构件钢筋总重(kg)：907.838</span>
					</div>
					<div class="gridbox">
						<div class="grid-top">
							<div class="grid-clip">
								<table class="grid">
									<colgroup>
										<col class="c33"><col class="c73"><col class="c57"><col class="c35"><col class="c33"><col class="c202"><col class="c165"><col class="c156"><col class="c61"><col class="c38"><col class="c39"><col class="c49"><col class="c61"><col class="c61"><col class="c71"><col class="c40">
									</colgroup>
									<thead>
										<tr><th></th><th>筋号</th><th class="hot">直径<span class="a">(mm)</span></th><th>级别</th><th>图号</th><th>图形</th><th>计算公式</th><th>公式描述</th><th>长度<span class="a">(mm)</span></th><th>根数</th><th>搭接</th><th>损耗<span class="a">(%)</span></th><th>单重<span class="a">(kg)</span></th><th>总重<span class="a">(kg)</span></th><th>钢筋归类</th><th class="cut">搭接形式</th></tr>
									</thead>
									<tbody>
										<tr class="r1">
											<th class="hot a">1*</th><td>横向钢筋<span class="a">.1</span></td><td class="dia sel a">10</td><td class="lv">Φ</td><td class="a">0</td>
											<td class="shape"><svg width="202" height="29"><path d="M66 12v6h76" fill="none" stroke="#000"/><text class="rt" transform="translate(54 3) rotate(90)">130</text><text class="hz" x="98" y="31">1550</text></svg></td>
											<td class="a">1680</td><td>净长</td><td class="a">1680</td><td class="a">60</td><td class="a">0</td><td class="a">0</td><td class="a">1.037</td><td class="a">62.194</td><td>直筋</td><td class="cut">绑扎</td>
										</tr>
										<tr class="r2">
											<th class="a">2</th><td>横向钢筋<span class="a">.2</span></td><td class="dia a">8</td><td class="lv">Φ</td><td class="a">0</td>
											<td class="shape"><svg width="202" height="59"><path d="M45 3v38M44 41h124" fill="none" stroke="#000" stroke-width="2"/><text class="rt" transform="translate(31 4) rotate(90)">220</text><text class="hz" x="85" y="57">563</text><text class="hz" x="147" y="51">150</text></svg></td>
											<td class="a">783+150</td><td>净长<span class="a">+</span>端头</td><td class="a">933</td><td class="a">60</td><td class="a">0</td><td class="a">0</td><td class="a">0.369</td><td class="a">22.112</td><td>直筋</td><td class="cut">绑扎</td>
										</tr>
										<tr class="r3">
											<th class="a">3</th><td>横向钢筋<span class="a">.3</span></td><td class="dia a">12</td><td class="lv">Φ</td><td class="a">0</td>
											<td class="shape"><svg width="202" height="28"><path d="M60 14v5h90" fill="none" stroke="#000"/><text class="rt" transform="translate(47 4) rotate(90)">156</text><text class="hz" x="88" y="30">2170</text><text class="hz" x="135" y="30">480</text></svg></td>
											<td class="a">2326+40*d</td><td>净长<span class="a">+</span>端头</td><td class="a">2806</td><td class="a">118</td><td class="a">0</td><td class="a">0</td><td class="a">2.492</td><td class="a">294.024</td><td>直筋</td><td class="cut">绑扎</td>
										</tr>
										<tr class="r4">
											<th></th><td></td><td class="dia"></td><td></td><td></td>
											<td class="shape"><svg width="202" height="29"><path d="M81 6h20v24H81z" fill="none" stroke="#000" stroke-width="2"/><path d="M86 1h7v5h-7zM85 8l12 12M97 8L85 20" fill="none" stroke="#000"/></svg></td>
											<td></td><td></td><td></td><td></td><td></td><td></td><td></td><td></td><td></td><td></td>
										</tr>
									</tbody>
								</table>
							</div>
							<div class="vscroll">
								<span class="sb-btn sb-up"></span>
								<span class="vthumb"></span>
								<span class="sb-fill"></span>
								<span class="sb-btn sb-dn"></span>
							</div>
						</div>
						<div class="hscroll">
							<span class="hb hb-l"></span>
							<span class="hthumb"></span>
							<span class="sb-fill"></span>
							<span class="hb hb-r"></span>
						</div>
					</div>
				</div>
			</section>
		</main>
	</div>

	<footer class="statusbar">
		<span class="st s1 a">X=52621 Y=5543</span>
		<span class="st s2">层高<span class="a">:3m</span></span>
		<span class="st s3">底标高<span class="a">:8.95m</span></span>
		<span class="st s4 a">1(2)</span>
		<span class="st s5">按鼠标左键指定第一个角点，或拾取构件图元</span>
		<span class="st s6 a">355.4 FPS</span>
	</footer>

	<div class="taskbar">
		<span class="start"><svg width="16" height="16"><use href="#win"/></svg></span>
		<div class="search">
			<i class="ring"></i>
			<span>在这里输入你要搜索的内容</span>
			<svg class="s-mic" width="14" height="16"><use href="#mic"/></svg>
		</div>
		<div class="tasks">
			<span class="task"><svg width="20" height="16"><use href="#taskview"/></svg></span>
			<span class="task"><svg width="24" height="24"><use href="#fan"/></svg></span>
			<span class="task t-e t-ring">e</span>
			<span class="task"><svg width="20" height="20"><use href="#swirl"/></svg></span>
			<span class="task t-e t-edge">e</span>
			<span class="task t-e t-ie t-ring">e</span>
			<span class="task"><svg width="22" height="22"><use href="#ftp"/></svg></span>
			<span class="task run t-g">G</span>
			<span class="task run"><svg width="22" height="24"><use href="#egg"/></svg></span>
			<span class="task run active"><svg width="24" height="24"><use href="#app"/></svg></span>
		</div>
		<div class="tray">
			<span class="t-link">链接</span>
			<span class="t-cpu">25%<br>CPU使用</span>
			<svg class="t-up" width="12" height="8" viewBox="0 0 12 8"><path d="M1 7l5-6 5 6" fill="none" stroke="#fff"/></svg>
			<svg class="t-bat" width="16" height="16"><use href="#battery"/></svg>
			<svg class="t-wifi" width="16" height="16"><use href="#wifi"/></svg>
			<svg class="t-spk" width="16" height="16"><use href="#speaker"/></svg>
			<svg class="t-key" width="22" height="14"><use href="#keyb"/></svg>
			<span class="t-zh">中</span>
			<span class="t-s">S</span>
			<span class="t-clock">12:52<br>2018/2/2</span>
			<span class="t-note"><svg width="16" height="16" viewBox="0 0 16 16"><path d="M0 1h16v11H0z" fill="#fff"/><path d="M3 4h10M3 7h10" stroke="#000"/></svg><b>21</b></span>
		</div>
	</div>
</div>
</body>
</html>
```

FILE: styles.css
```css
* {
	box-sizing: border-box;
}
html, body {
	margin: 0;
	height: 100%;
}
body {
	width: 1366px;
	height: 768px;
	overflow: hidden;
	font: 12px/16px "Liberation Sans", "Noto Sans CJK SC", sans-serif;
	color: #1c1c1c;
	background: #f0f0f0;
}
i {
	font-style: normal;
}
.sprite {
	position: absolute;
	width: 0;
	height: 0;
}
.app {
	position: relative;
	display: flex;
	flex-direction: column;
	height: 768px;
}
.ic {
	width: 16px;
	height: 16px;
	flex: none;
}
/* 单字符宽度和宋体一样是 6px */
.a {
	font-family: "Liberation Mono", "Noto Sans CJK SC", monospace;
	letter-spacing: -1.2px;
}
.caret {
	flex: none;
	width: 0;
	height: 0;
	margin-left: 6px;
	border: 3px solid transparent;
	border-top: 3px solid #222;
	border-bottom: 0;
}
.caret.tight {
	margin-left: -2px;
}
.sep {
	flex: none;
	width: 1px;
	height: 20px;
	margin: 0 2px 0 3px;
	background: #c8c8c8;
}
.grab {
	flex: none;
	width: 3px;
	height: 16px;
	margin: 0 1px 0 2px;
	background: radial-gradient(circle, #999 1px, transparent 1.2px) 0 0 / 3px 4px;
}
.more {
	margin-left: auto;
	margin-right: 1px;
	font-size: 14px;
	line-height: 14px;
	align-self: flex-start;
	font-weight: bold;
}
.bar {
	display: flex;
	align-items: center;
	background: #f8f8f8;
}
.tool {
	display: inline-flex;
	align-items: center;
	flex: none;
	gap: 4px;
	height: 100%;
	padding: 0 4px;
	white-space: nowrap;
}
/* 对齐用的小偏移 */
.sh-3 { margin-left: -3px; }
.sh-2 { margin-left: -2px; }
.sh-1 { margin-left: -1px; }
.sh1 { margin-left: 1px; }
.sh3 { margin-left: 3px; }
.bar .tool,
.rowdetail .tool {
	padding-top: 2px;
}
.tool.off {
	color: #a8a8a8;
}
.tool.on {
	height: 21px;
	padding: 2px 3px 0;
	background: #dceaf6;
	outline: 1px solid #0a78d0;
	outline-offset: -1px;
}
.combo {
	display: flex;
	align-items: center;
	flex: none;
	justify-content: space-between;
	height: 24px;
	margin-right: 2px;
	padding: 2px 5px 0 2px;
	background: #fff;
}
.w58 { width: 58px; }
.w59 { width: 59px; }
.w69 { width: 69px; }
.w70 { width: 70px; }
.w71 { width: 71px; }

/* 标题栏 */
.titlebar {
	display: flex;
	align-items: center;
	flex: none;
	height: 23px;
	background: #fff;
}
.logo {
	margin-left: 4px;
}
.title {
	margin-left: 3px;
	font-size: 12.4px;
	white-space: nowrap;
}
.path {
	letter-spacing: .36px;
}
.title-end {
	margin-left: 33px;
}
.winbtns {
	display: flex;
	margin-left: auto;
	margin-right: 3px;
}
.winbtn {
	display: flex;
	align-items: center;
	justify-content: center;
	width: 45px;
	height: 23px;
}
.win-min {
	width: 10px;
	height: 1px;
	background: #222;
}
.win-max {
	width: 10px;
	height: 10px;
	border: 1px solid #222;
	box-shadow: 2px -2px 0 -1px #fff, 2px -2px 0 0 #222;
}
.badge {
	position: absolute;
	left: 707px;
	top: -27px;
	width: 44px;
	height: 44px;
	padding-top: 27px;
	border-radius: 50%;
	text-align: center;
	font-weight: bold;
	font-size: 11px;
	line-height: 14px;
	color: #fff;
	background: linear-gradient(#55b84a, #3ca03c);
	box-shadow: 0 2px 3px rgba(0,0,0,0.5);
}
.ime {
	position: absolute;
	left: 1022px;
	top: 4px;
	display: flex;
	align-items: center;
	width: 183px;
	height: 23px;
	background: #fff;
	border: 1px solid #c0d0dc;
}
.ime-logo {
	position: absolute;
	left: -23px;
	top: -4px;
	width: 22px;
	height: 26px;
	text-align: center;
	font: bold 22px/26px "Liberation Sans", sans-serif;
	color: #fff;
	background: #e8501e;
	border-radius: 3px;
	transform: rotate(-8deg);
}
.ime-zh {
	margin-left: 10px;
	font-size: 15px;
	font-weight: bold;
	color: #1a7cc8;
}
.ime-dot {
	margin-left: 6px;
	width: 16px;
	font-weight: bold;
	font-size: 14px;
	color: #1a7cc8;
}
.ime-ic {
	width: 16px;
	height: 16px;
	margin-left: 6px;
}
.ime-smile {
	margin-left: 4px;
}

/* 菜单 */
.menubar {
	display: flex;
	align-items: center;
	flex: none;
	gap: 9px;
	height: 31px;
	padding-left: 7px;
	white-space: nowrap;
	background: linear-gradient(#fafafa, #f0f0f0);
}
.menubar > span:nth-child(5) { margin-left: 2px; }
.menubar > span:nth-child(6) { margin-left: 2px; }
.menubar > span:nth-child(7) { margin-left: 2px; }
.menubar > span:nth-child(8) { margin-left: 2px; }
.menubar > span:nth-child(9) { margin-left: 1px; }
.menubar > span:nth-child(10) { margin-left: 2px; }
.menubar > span:nth-child(12) { margin-left: 3px; }
.menubar > span:nth-child(13) { margin-left: -1px; }
.menubar > span:nth-child(14) { margin-left: 2px; }
.menubar > span.m-new {
	margin-left: -5px;
}
.m-new .caret {
	margin-left: 2px;
}
.menubar > span.m-xiao {
	margin-left: -9px;
}
.adbox {
	flex: none;
	width: 188px;
	height: 28px;
	margin-left: -6px;
	padding: 6px 0 0 31px;
	color: #3a7010;
	background: #f8f8f8;
}
.adbox b {
	font-weight: normal;
	color: #1e5a10;
}
.menubar > span.m-user {
	margin-left: -9px;
}
.phone {
	letter-spacing: .4px;
}
.m-user .caret {
	margin-left: 2px;
}
.menubar > span.m-bean {
	margin-left: -4px;
}
.m-bell {
	margin-left: 7px;
}
.m-more {
	margin-right: 1px;
}

/* 顶部工具条 */
.toolrow-top {
	display: flex;
	flex: none;
	height: 26px;
	margin-bottom: 4px;
}
.bar-file {
	width: 148px;
	margin-left: 3px;
	padding-left: 4px;
	background: #f8f8f8;
}
.ic-open {
	margin-left: 8px;
}
.bar-file .caret {
	margin-left: 4px;
}
.ic-save {
	margin-left: 5px;
}
.bar-file .sep {
	margin: 0 8px 0 6px;
}
.bar-main {
	width: 601px;
	margin-left: 2px;
}
.sigma {
	gap: 6px;
}
.sigma b {
	width: 12px;
	margin-left: 1px;
	font: bold 15px "Liberation Serif", serif;
	text-align: center;
}
.bar-view {
	flex: 1;
	margin-left: 3px;
}
.view3d {
	width: 63px;
	padding-left: 3px;
	background: #fff;
}
.bar-view .caret {
	margin-left: 2px;
}
.bar-view .view3d .caret {
	margin-left: 9px;
}

/* 主体 */
.workspace {
	display: flex;
	flex: 1;
	min-height: 0;
}
.sidebar {
	display: flex;
	flex-direction: column;
	flex: none;
	width: 165px;
}
.side-head {
	display: flex;
	align-items: center;
	gap: 9px;
	height: 16px;
	padding-right: 4px;
	color: #fff;
	letter-spacing: .5px;
	background: #0054e3;
}
.side-head span {
	margin-right: auto;
}
.side-btn {
	flex: none;
	height: 22px;
	padding-top: 1px;
	line-height: 20px;
	text-align: center;
	background: #f0f0f0;
	border: 1px solid #a0a0a0;
}
.side-tools {
	display: flex;
	gap: 8px;
	height: 24px;
	padding: 7px 0 0 7px;
}
.tree {
	position: relative;
	flex: 1;
	margin: 0 2px;
	padding-top: 6px;
	overflow: hidden;
	background: #fff;
	border: 1px solid #8c8c8c;
}
.node {
	display: flex;
	align-items: center;
	height: 16px;
	padding-left: 8px;
	white-space: nowrap;
}
.chev {
	flex: none;
	width: 6px;
	height: 6px;
	margin-left: 1px;
	border: solid #aaa;
	border-width: 2px 2px 0 0;
	transform: rotate(45deg);
}
.chev.open {
	margin: -2px 0 0 1px;
	border-color: #444;
	transform: rotate(135deg);
}
.dots {
	flex: none;
	width: 3px;
	margin-left: 4px;
	border-top: 1px dotted #888;
}
.fold {
	height: 14px;
	margin: 0 5px 0 1px;
}
.kids {
	margin-left: 12px;
	padding-left: 18px;
	border-left: 1px dotted #888;
}
.kid {
	display: flex;
	align-items: center;
	height: 16px;
	border-left: 1px dotted #888;
	white-space: nowrap;
}
.tick {
	flex: none;
	align-self: flex-start;
	width: 10px;
	height: 8px;
	border-bottom: 1px dotted #888;
}
.kid:last-child {
	border-left-color: transparent;
}
.kid:last-child .tick {
	margin-left: -1px;
	width: 11px;
	border-left: 1px dotted #888;
}
.kid > span {
	margin-left: 5px;
}
.kid.cur > span {
	display: inline-block;
	align-self: stretch;
	width: 66px;
	margin-left: 5px;
}
.kid.cur {
	background: linear-gradient(90deg, transparent 10px, #d4d4d4 10px, #d4d4d4 99px, transparent 99px);
}
.ic-bim {
	margin-left: 0;
	width: 15px;
	height: 15px;
}
.ic-bim2 {
	margin-left: 6px;
	width: 15px;
	height: 15px;
}
.newtag {
	align-self: flex-start;
	margin: -1px 0 0 1px;
	padding: 0 1px;
	font: bold 9px/9px "Liberation Sans", sans-serif;
	color: #222;
	background: #ffd400;
}
.cursor {
	position: absolute;
	left: 50px;
	top: 423px;
}
.btn-low {
	margin-top: 2px;
	height: 21px;
}

.content {
	display: flex;
	flex-direction: column;
	flex: 1;
	min-width: 0;
	margin-left: 5px;
}
.row-edit {
	flex: none;
	width: 791px;
	height: 23px;
	margin-left: 1px;
	margin-bottom: 4px;
	padding-left: 1px;
}
.row-edit .sep {
	margin: 0 1px 0 2px;
}
.row-props {
	display: flex;
	flex: none;
	height: 24px;
	margin-left: 1px;
	margin-bottom: 4px;
}
.bar-props {
	width: 566px;
	padding-left: 8px;
}
.bar-props .caret {
	margin-left: 0;
}
.bar-props .sep {
	margin: 0 2px;
}
.w-edit {
	margin-left: 0;
	height: 24px;
	padding-left: 3px;
}
.w-list {
	margin-left: 0;
}
.bar-aux {
	width: 421px;
	margin-left: 3px;
}
.bar-aux .caret {
	margin-left: 2px;
}
.row-draw {
	display: flex;
	flex: none;
	height: 26px;
	margin-bottom: 3px;
}
.bar-draw {
	width: 494px;
	margin-left: 8px;
}
.w-sel {
	height: 25px !important;
	padding-left: 4px;
	gap: 9px;
	width: 50px;
}
.bar-draw > .caret {
	margin-left: 3px;
}
.bar-draw .tool .caret {
	margin-left: 4px;
}
.bar-draw .tool .caret.tight {
	margin-left: -2px;
}
.t-line {
	gap: 2px;
}
.c-blank {
	justify-content: flex-end;
	margin: 0 0 0 -1px;
}
.c-blank .caret {
	margin-left: 0;
}
.scene {
	display: block;
	flex: none;
	width: 1196px;
	height: 305px;
}
.axis-label text {
	font: 13px "Liberation Mono", monospace;
	fill: #ccc;
}
.gizmo {
	font: 10px "Liberation Mono", monospace;
}

/* 捕捉栏 */
.row-snap {
	flex: none;
	height: 26px;
	margin-top: 2px;
	margin-bottom: 6px;
}
.bar-snap {
	width: 887px;
	height: 25px;
}
.bar-snap > .grab:first-child {
	margin-left: 3px;
}
.bar-snap > .grab {
	margin: 0 1px 0 4px;
}
.bar-snap .tool.on {
	gap: 3px;
	padding: 2px 4px 0 3px;
}
.bar-snap .tool.wide {
	gap: 5px;
}
.c-off {
	margin-left: 10px;
	height: 22px;
}
.c-off .caret {
	margin-left: 0;
}
.lbl {
	color: #888;
	font-size: 12px;
}
.l-x {
	margin-left: 0;
	margin-right: 3px;
}
.l-y {
	margin-left: 9px;
	margin-right: 2px;
}
.spin {
	position: relative;
	flex: none;
	height: 22px;
	margin-right: 1px;
	padding-right: 18px;
	line-height: 18px;
	text-align: right;
	color: #888;
	font-size: 13px;
	border: 2px solid #888;
	background: #f4f4f4;
}
.s58 { width: 58px; }
.s68 { width: 68px; }
.arrows {
	position: absolute;
	right: 3px;
	top: 3px;
	width: 7px;
	height: 12px;
	background:
		linear-gradient(45deg, transparent 50%, #555 50%) 0 0 / 4px 4px no-repeat,
		linear-gradient(-45deg, transparent 50%, #555 50%) 3px 0 / 4px 4px no-repeat,
		linear-gradient(135deg, transparent 50%, #555 50%) 0 8px / 4px 4px no-repeat,
		linear-gradient(-135deg, transparent 50%, #555 50%) 3px 8px / 4px 4px no-repeat;
}
.check {
	flex: none;
	width: 11px;
	height: 11px;
	margin: 0 9px 0 3px;
	border: 1px solid #777;
	background: #fff;
}
.rot {
	width: 28px;
}

/* 钢筋明细 */
.rebar {
	display: flex;
	flex: 1;
	min-height: 0;
}
.rebar-grip {
	flex: none;
	width: 12px;
	padding: 2px 0 0 2px;
	background: radial-gradient(circle, #c0c0c0 1px, transparent 1.2px) 0 0 / 4px 4px;
}
.rebar-main {
	display: flex;
	flex-direction: column;
	flex: 1;
	min-width: 0;
}
.rowdetail {
	display: flex;
	align-items: center;
	flex: none;
	width: 1181px;
	height: 21px;
	margin-bottom: 5px;
	padding-left: 4px;
	background: #f9f9f9;
}
.n-prev,
.n-last {
	margin-left: 9px;
}
.n-next {
	margin-left: 6px;
}
.rowdetail .sep {
	margin: 0 2px 0 5px;
}
.n-up {
	margin-left: 5px;
}
.t-close {
	margin-left: 1px;
}
.total {
	margin-left: 5px;
	padding-top: 2px;
	white-space: nowrap;
}
.gridbox {
	flex: none;
	width: 1181px;
	height: 172px;
	border: 1px solid #9a9a9a;
	background: #f0f0f0;
}
.grid-top {
	display: flex;
	height: 154px;
}
.grid-clip {
	flex: none;
	width: 1163px;
	overflow: hidden;
}
.grid {
	width: 1174px;
	table-layout: fixed;
	border-collapse: collapse;
}
.c33 { width: 33px; }
.c73 { width: 73px; }
.c57 { width: 57px; }
.c35 { width: 35px; }
.c202 { width: 202px; }
.c165 { width: 165px; }
.c156 { width: 156px; }
.c61 { width: 61px; }
.c38 { width: 38px; }
.c39 { width: 39px; }
.c49 { width: 49px; }
.c71 { width: 71px; }
.c40 { width: 40px; }
.grid th,
.grid td {
	padding: 0 0 0 2px;
	border: 1px solid #bcbcbc;
	white-space: nowrap;
	overflow: hidden;
	font-weight: normal;
}
.grid thead th {
	height: 18px;
	padding: 3px 0 0;
	line-height: 13px;
	text-align: center;
	background: linear-gradient(#fff, #e8e8e8);
}
.grid thead th.hot {
	color: #60005c;
	background: linear-gradient(#fbd99e, #f5bf74);
}
.grid thead th.cut {
	text-align: left;
	padding-left: 12px;
}
.grid tbody th {
	text-align: center;
	padding: 0;
	background: linear-gradient(90deg, #fafafa, #ececec);
}
.grid tbody th.hot {
	color: #800000;
	background: #fdd38e;
}
.grid td {
	background: #ccffd6;
}
.grid td.dia {
	border-left: 2px solid #000;
}
.grid td.sel {
	background: #aae8d4;
}
.grid td.lv {
	padding: 0;
	text-align: center;
	text-decoration: underline;
	font-family: "Liberation Serif", serif;
}
.grid td.shape {
	padding: 0;
	vertical-align: top;
}
.shape svg {
	display: block;
	overflow: hidden;
}
.shape text {
	font: 11px "Liberation Mono", monospace;
	fill: #111;
}
.r1 > * { height: 29px; }
.r2 > * { height: 59px; }
.r3 > * { height: 28px; }
.r4 > * { height: 29px; }

.vscroll {
	display: flex;
	flex-direction: column;
	flex: 1;
	background: #f0f0f0;
}
.sb-btn {
	flex: none;
	height: 18px;
}
.sb-up {
	background: linear-gradient(135deg, transparent 50%, #555 50%, #555 62%, transparent 62%) 4px 8px / 5px 5px no-repeat, linear-gradient(-135deg, transparent 50%, #555 50%, #555 62%, transparent 62%) 8px 8px / 5px 5px no-repeat;
}
.sb-dn {
	background: linear-gradient(45deg, transparent 50%, #555 50%, #555 62%, transparent 62%) 4px 5px / 5px 5px no-repeat, linear-gradient(-45deg, transparent 50%, #555 50%, #555 62%, transparent 62%) 8px 5px / 5px 5px no-repeat;
}
.vthumb {
	flex: none;
	height: 17px;
	background: #cdcdcd;
}
.sb-fill {
	flex: 1;
}
.hscroll {
	display: flex;
	height: 16px;
}
.hb {
	flex: none;
	width: 18px;
	text-align: center;
	line-height: 14px;
	font-weight: bold;
	color: #555;
}
.hb-l::before {
	content: "‹";
	font-size: 16px;
}
.hb-r::before {
	content: "›";
	font-size: 16px;
}
.hthumb {
	flex: none;
	width: 811px;
	background: #cdcdcd;
}

/* 状态栏 */
.statusbar {
	display: flex;
	flex: none;
	gap: 2px;
	height: 20px;
	margin-top: 2px;
	background: #f0f0f0;
}
.st {
	flex: none;
	padding-left: 2px;
	line-height: 18px;
	white-space: nowrap;
	background: #f8f8f8;
	border: 1px solid #e0e0e0;
}
.s1 { width: 148px; }
.s2 { width: 78px; }
.s3 { width: 98px; }
.s4 { width: 48px; }
.s5 { width: 912px; }
.s6 { width: 70px; }

/* 任务栏 */
.taskbar {
	display: flex;
	align-items: stretch;
	flex: none;
	height: 40px;
	color: #fff;
	background: linear-gradient(90deg, #000 0, #04090d 60%, #0a1014);
}
.start {
	display: flex;
	align-items: center;
	justify-content: center;
	width: 48px;
	background: #000;
}
.search {
	display: flex;
	align-items: center;
	width: 344px;
	padding-left: 10px;
	color: #8a8a8a;
	font-size: 14px;
	background: #383838;
}
.ring {
	width: 20px;
	height: 20px;
	margin-right: 6px;
	border: 3px solid #ddd;
	border-radius: 50%;
}
.s-mic {
	margin-left: auto;
	margin-right: 14px;
}
.tasks {
	display: flex;
	flex: none;
}
.task {
	position: relative;
	display: flex;
	align-items: center;
	justify-content: center;
	width: 50px;
}
.t-e {
	font: bold 30px/36px "Liberation Sans", sans-serif;
	color: #eee;
}
.t-ring::after {
	content: "";
	position: absolute;
	left: 13px;
	top: 15px;
	width: 26px;
	height: 12px;
	border: 2px solid transparent;
	border-top-color: #ddd;
	border-radius: 50%;
	transform: rotate(-32deg);
}
.t-edge {
	color: #1a88e8;
}
.t-ie {
	color: #3aa0e8;
}
.t-ie::after {
	border-top-color: #f5c518;
}
.t-g {
	font: bold 30px/36px "Liberation Sans", sans-serif;
	color: #1a88e8;
}
.run {
	margin: 0 3px;
	width: 44px;
	border-bottom: 2px solid #76b9ed;
}
.active {
	margin: 0;
	width: 50px;
	background: #3a4248;
}
.tray {
	display: flex;
	align-items: center;
	flex: none;
	margin-left: 57px;
	font-size: 12px;
	color: #e8e8e8;
}
.t-link {
	width: 24px;
	white-space: nowrap;
}
.t-cpu {
	width: 50px;
	margin-left: 19px;
	line-height: 17px;
	text-align: center;
	white-space: nowrap;
}
.t-up {
	margin-left: 17px;
}
.t-bat {
	margin-left: 11px;
}
.t-wifi {
	margin-left: 9px;
}
.t-spk {
	margin-left: 4px;
}
.t-key {
	margin-left: 11px;
}
.t-zh {
	margin-left: 11px;
	color: #fff;
	font-weight: bold;
	font-size: 13px;
}
.t-s {
	width: 14px;
	height: 17px;
	margin-left: 6px;
	border-radius: 2px;
	font: bold 13px/17px "Liberation Sans", sans-serif;
	text-align: center;
	color: #fff;
	background: #e8501e;
}
.t-clock {
	width: 54px;
	margin-left: 30px;
	font-size: 13px;
	line-height: 17px;
	text-align: center;
	white-space: nowrap;
}
.t-note {
	position: relative;
	width: 20px;
	height: 16px;
	margin-left: 23px;
}
.t-note b {
	position: absolute;
	left: 5px;
	top: 6px;
	width: 19px;
	height: 19px;
	border-radius: 50%;
	border: 1px solid #888;
	font-size: 11px;
	line-height: 17px;
	text-align: center;
	background: #333;
}
```
